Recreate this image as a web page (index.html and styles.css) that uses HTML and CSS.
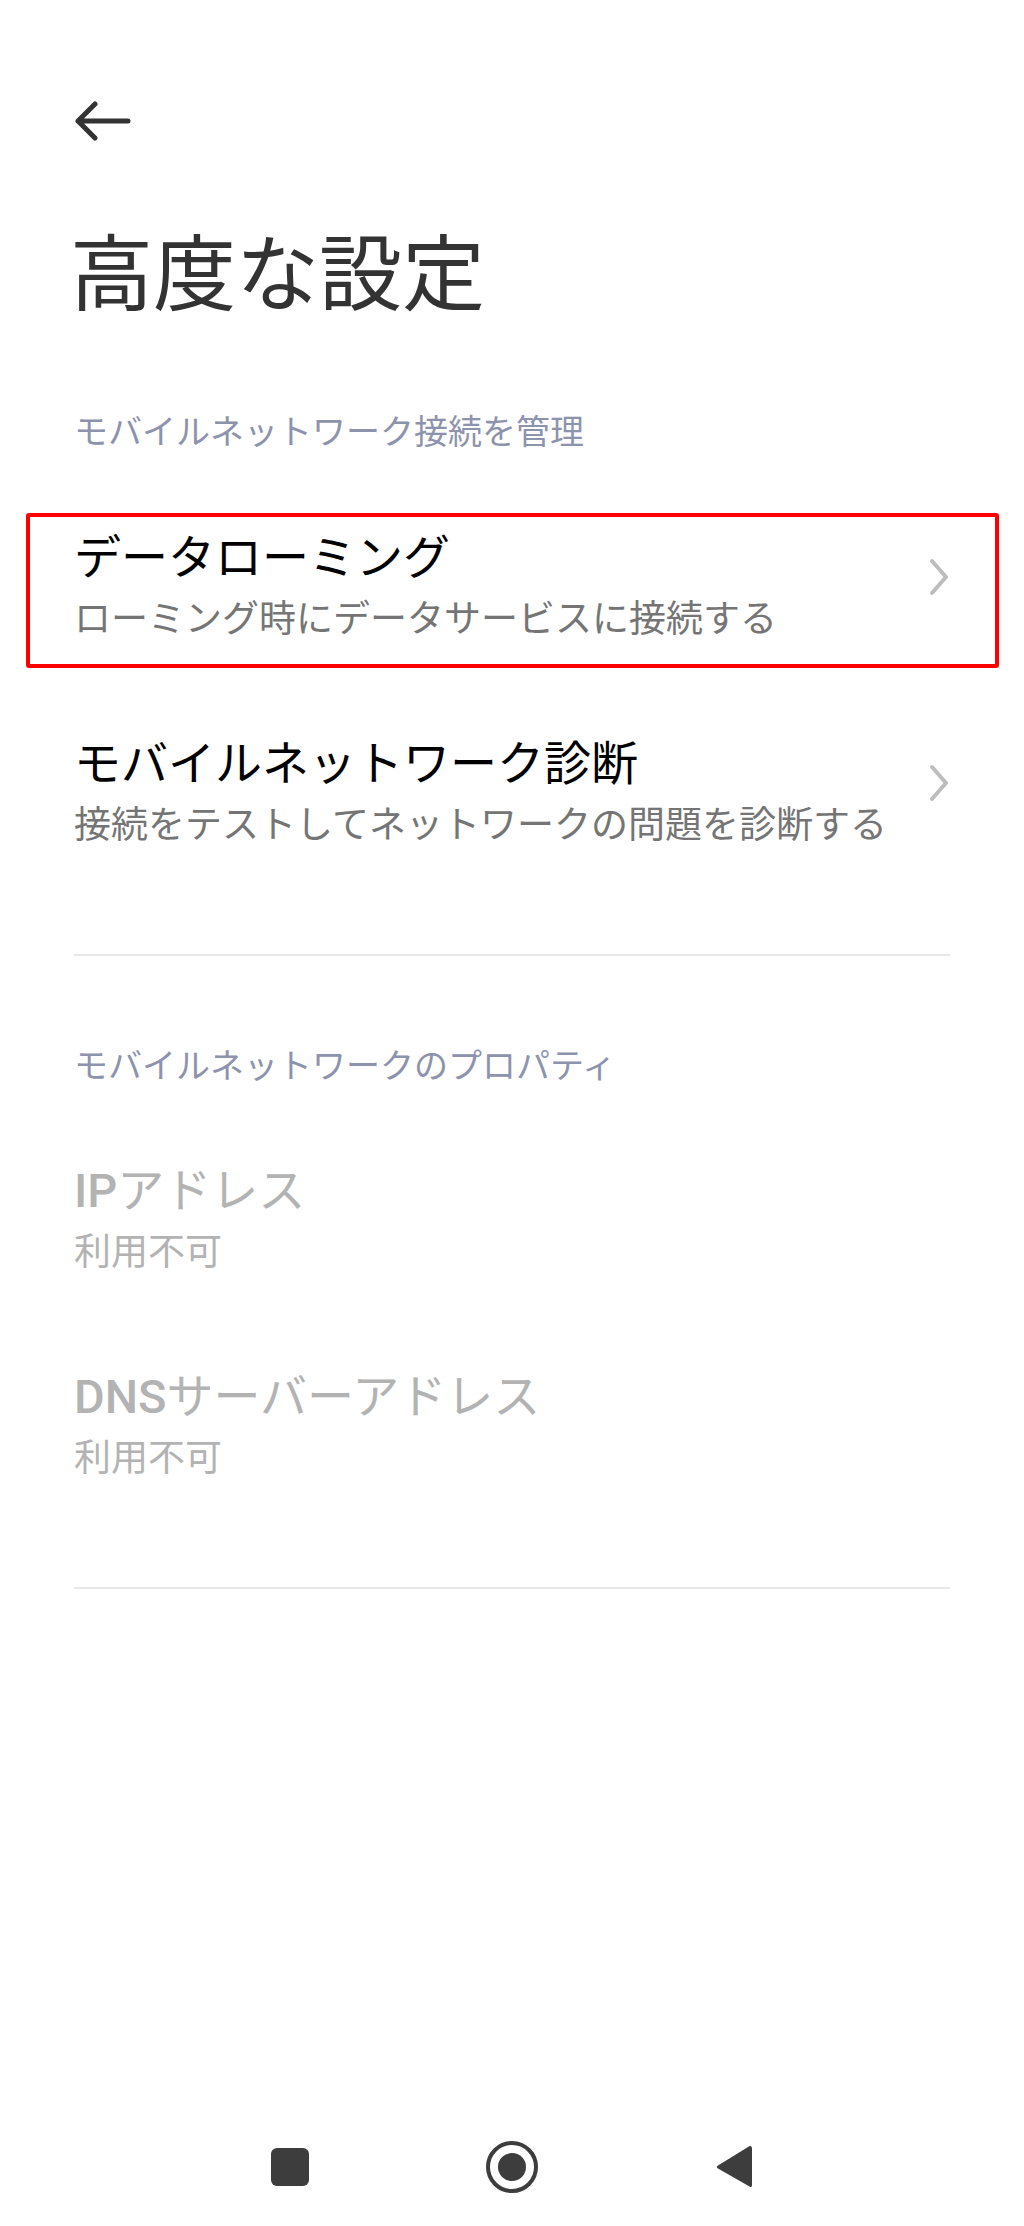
FILE: index.html
```html
<!DOCTYPE html>
<html lang="ja">
<head>
<meta charset="utf-8">
<title>高度な設定</title>
<link rel="stylesheet" href="styles.css">
</head>
<body>
<div class="screen">
  <header class="topbar">
    <svg class="back-icon" width="56" height="40" viewBox="0 0 56 40" aria-label="戻る">
      <path d="M3 20 H53 M20 3 L3 20 L20 37" fill="none" stroke="#333333" stroke-width="5" stroke-linecap="round" stroke-linejoin="round"/>
    </svg>
  </header>

  <h1 class="page-title">高度な設定</h1>

  <h2 class="section-header">モバイルネットワーク接続を管理</h2>

  <div class="list">
    <div class="item">
      <div class="item-text">
        <div class="item-title">データローミング</div>
        <div class="item-sub">ローミング時にデータサービスに接続する</div>
      </div>
      <svg class="chevron" width="22" height="40" viewBox="0 0 22 40">
        <polyline points="4,4 18,20 4,36" fill="none" stroke="#bdbdbd" stroke-width="4" stroke-linecap="round" stroke-linejoin="round"/>
      </svg>
      <div class="highlight"></div>
    </div>
    <div class="item">
      <div class="item-text">
        <div class="item-title">モバイルネットワーク診断</div>
        <div class="item-sub">接続をテストしてネットワークの問題を診断する</div>
      </div>
      <svg class="chevron" width="22" height="40" viewBox="0 0 22 40">
        <polyline points="4,4 18,20 4,36" fill="none" stroke="#bdbdbd" stroke-width="4" stroke-linecap="round" stroke-linejoin="round"/>
      </svg>
    </div>
  </div>

  <div class="divider"></div>

  <h2 class="section-header section-header-2">モバイルネットワークのプロパティ</h2>

  <div class="list list-props">
    <div class="item item-disabled">
      <div class="item-text">
        <div class="item-title"><span class="latin">IP</span>アドレス</div>
        <div class="item-sub">利用不可</div>
      </div>
    </div>
    <div class="item item-disabled">
      <div class="item-text">
        <div class="item-title"><span class="latin">DNS</span>サーバーアドレス</div>
        <div class="item-sub">利用不可</div>
      </div>
    </div>
  </div>

  <div class="divider"></div>

  <nav class="navbar">
    <div class="nav-btn">
      <svg width="40" height="40" viewBox="0 0 40 40"><rect x="1" y="1" width="38" height="38" rx="6" fill="#3d3d3d"/></svg>
    </div>
    <div class="nav-btn">
      <svg width="56" height="56" viewBox="0 0 56 56"><circle cx="28" cy="28" r="24" fill="none" stroke="#3d3d3d" stroke-width="4"/><circle cx="28" cy="28" r="14" fill="#3d3d3d"/></svg>
    </div>
    <div class="nav-btn">
      <svg width="40" height="48" viewBox="0 0 40 48"><path d="M36 3 Q38 3 38 6 V42 Q38 45 35.5 43.5 L4 25.5 Q1.5 24 4 22.5 L34 4 Q35 3 36 3 Z" fill="#3d3d3d"/></svg>
    </div>
  </nav>
</div>
</body>
</html>
```

FILE: styles.css
```css
* {
  box-sizing: border-box;
}

html, body {
  margin: 0;
  padding: 0;
  background: #ffffff;
}

body {
  font-family: "Noto Sans CJK JP", "Noto Sans", sans-serif;
}

.screen {
  width: 1024px;
  height: 2226px;
  display: flex;
  flex-direction: column;
  overflow: hidden;
}

.topbar {
  padding: 101px 0 0 75px;
  height: 141px;
}

.back-icon {
  display: block;
}

.page-title {
  margin: 86px 0 0 0;
  padding-left: 70px;
  font-size: 83px;
  line-height: 1;
  font-weight: 400;
  color: #333333;
}

.section-header {
  margin: 103px 0 0 0;
  padding-left: 74px;
  font-size: 34px;
  line-height: 1;
  font-weight: 400;
  color: #8e93ad;
}

.section-header-2 {
  margin-top: 91px;
}

.list {
  margin-top: 37px;
  display: flex;
  flex-direction: column;
}

.list-props {
  margin-top: 36px;
}

.item {
  position: relative;
  display: flex;
  align-items: center;
  padding: 46px 74px 55px 74px;
}

.item-text {
  flex: 1;
  display: flex;
  flex-direction: column;
  gap: 21px;
}

.item-title {
  font-size: 47px;
  line-height: 1;
  color: #000000;
}

.item-sub {
  font-size: 37px;
  line-height: 1;
  color: #757575;
}

.item-disabled .item-title,
.item-disabled .item-sub {
  color: #b3b3b3;
}

.latin {
  font-family: Roboto, "Noto Sans", sans-serif;
  font-weight: 500;
  line-height: 0;
}

.chevron {
  flex: none;
  display: block;
  margin-bottom: 12px;
}

.highlight {
  position: absolute;
  top: 29px;
  left: 26px;
  width: 973px;
  height: 155px;
  border: 4px solid #ff0000;
  border-radius: 3px;
  pointer-events: none;
}

.divider {
  margin: 58px 74px 0 74px;
  height: 2px;
  background: #e8e8e8;
}

.navbar {
  margin-top: auto;
  height: 60px;
  margin-bottom: 29px;
  display: flex;
  justify-content: center;
  gap: 162px;
}

.nav-btn {
  width: 60px;
  height: 60px;
  display: flex;
  align-items: center;
  justify-content: center;
}

.nav-btn svg {
  display: block;
}
```
